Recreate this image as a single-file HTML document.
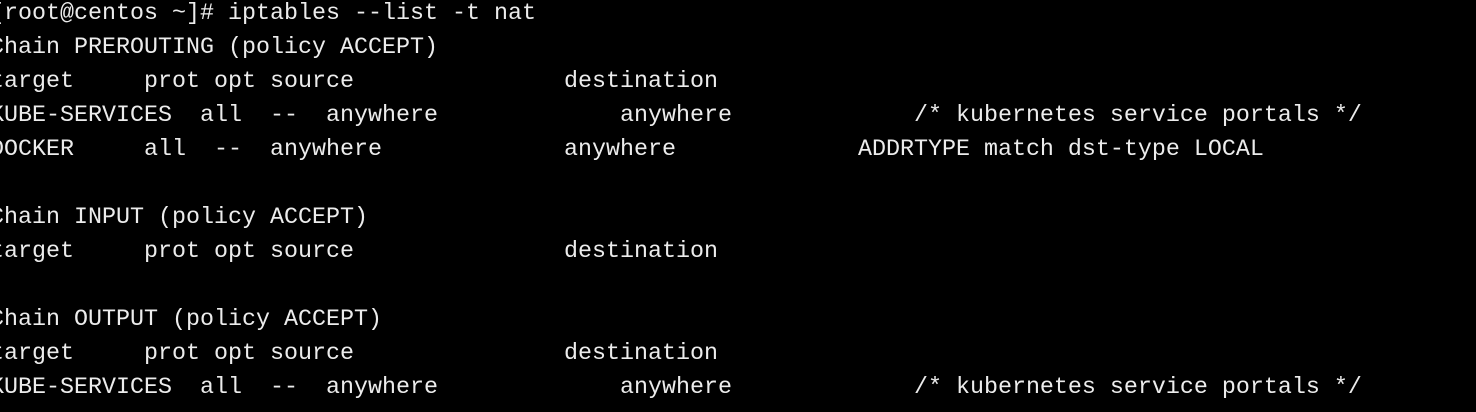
<!DOCTYPE html>
<html><head><meta charset="utf-8"><style>
html,body{margin:0;padding:0;background:#000;width:1476px;height:412px;overflow:hidden}
pre{position:absolute;left:-10px;top:-3px;margin:0;font-family:"Liberation Mono",monospace;font-size:23.33px;line-height:34px;color:#ececec;white-space:pre}
</style></head><body><pre>[root@centos ~]# iptables --list -t nat
Chain PREROUTING (policy ACCEPT)
target     prot opt source               destination
KUBE-SERVICES  all  --  anywhere             anywhere             /* kubernetes service portals */
DOCKER     all  --  anywhere             anywhere             ADDRTYPE match dst-type LOCAL

Chain INPUT (policy ACCEPT)
target     prot opt source               destination

Chain OUTPUT (policy ACCEPT)
target     prot opt source               destination
KUBE-SERVICES  all  --  anywhere             anywhere             /* kubernetes service portals */
</pre></body></html>
